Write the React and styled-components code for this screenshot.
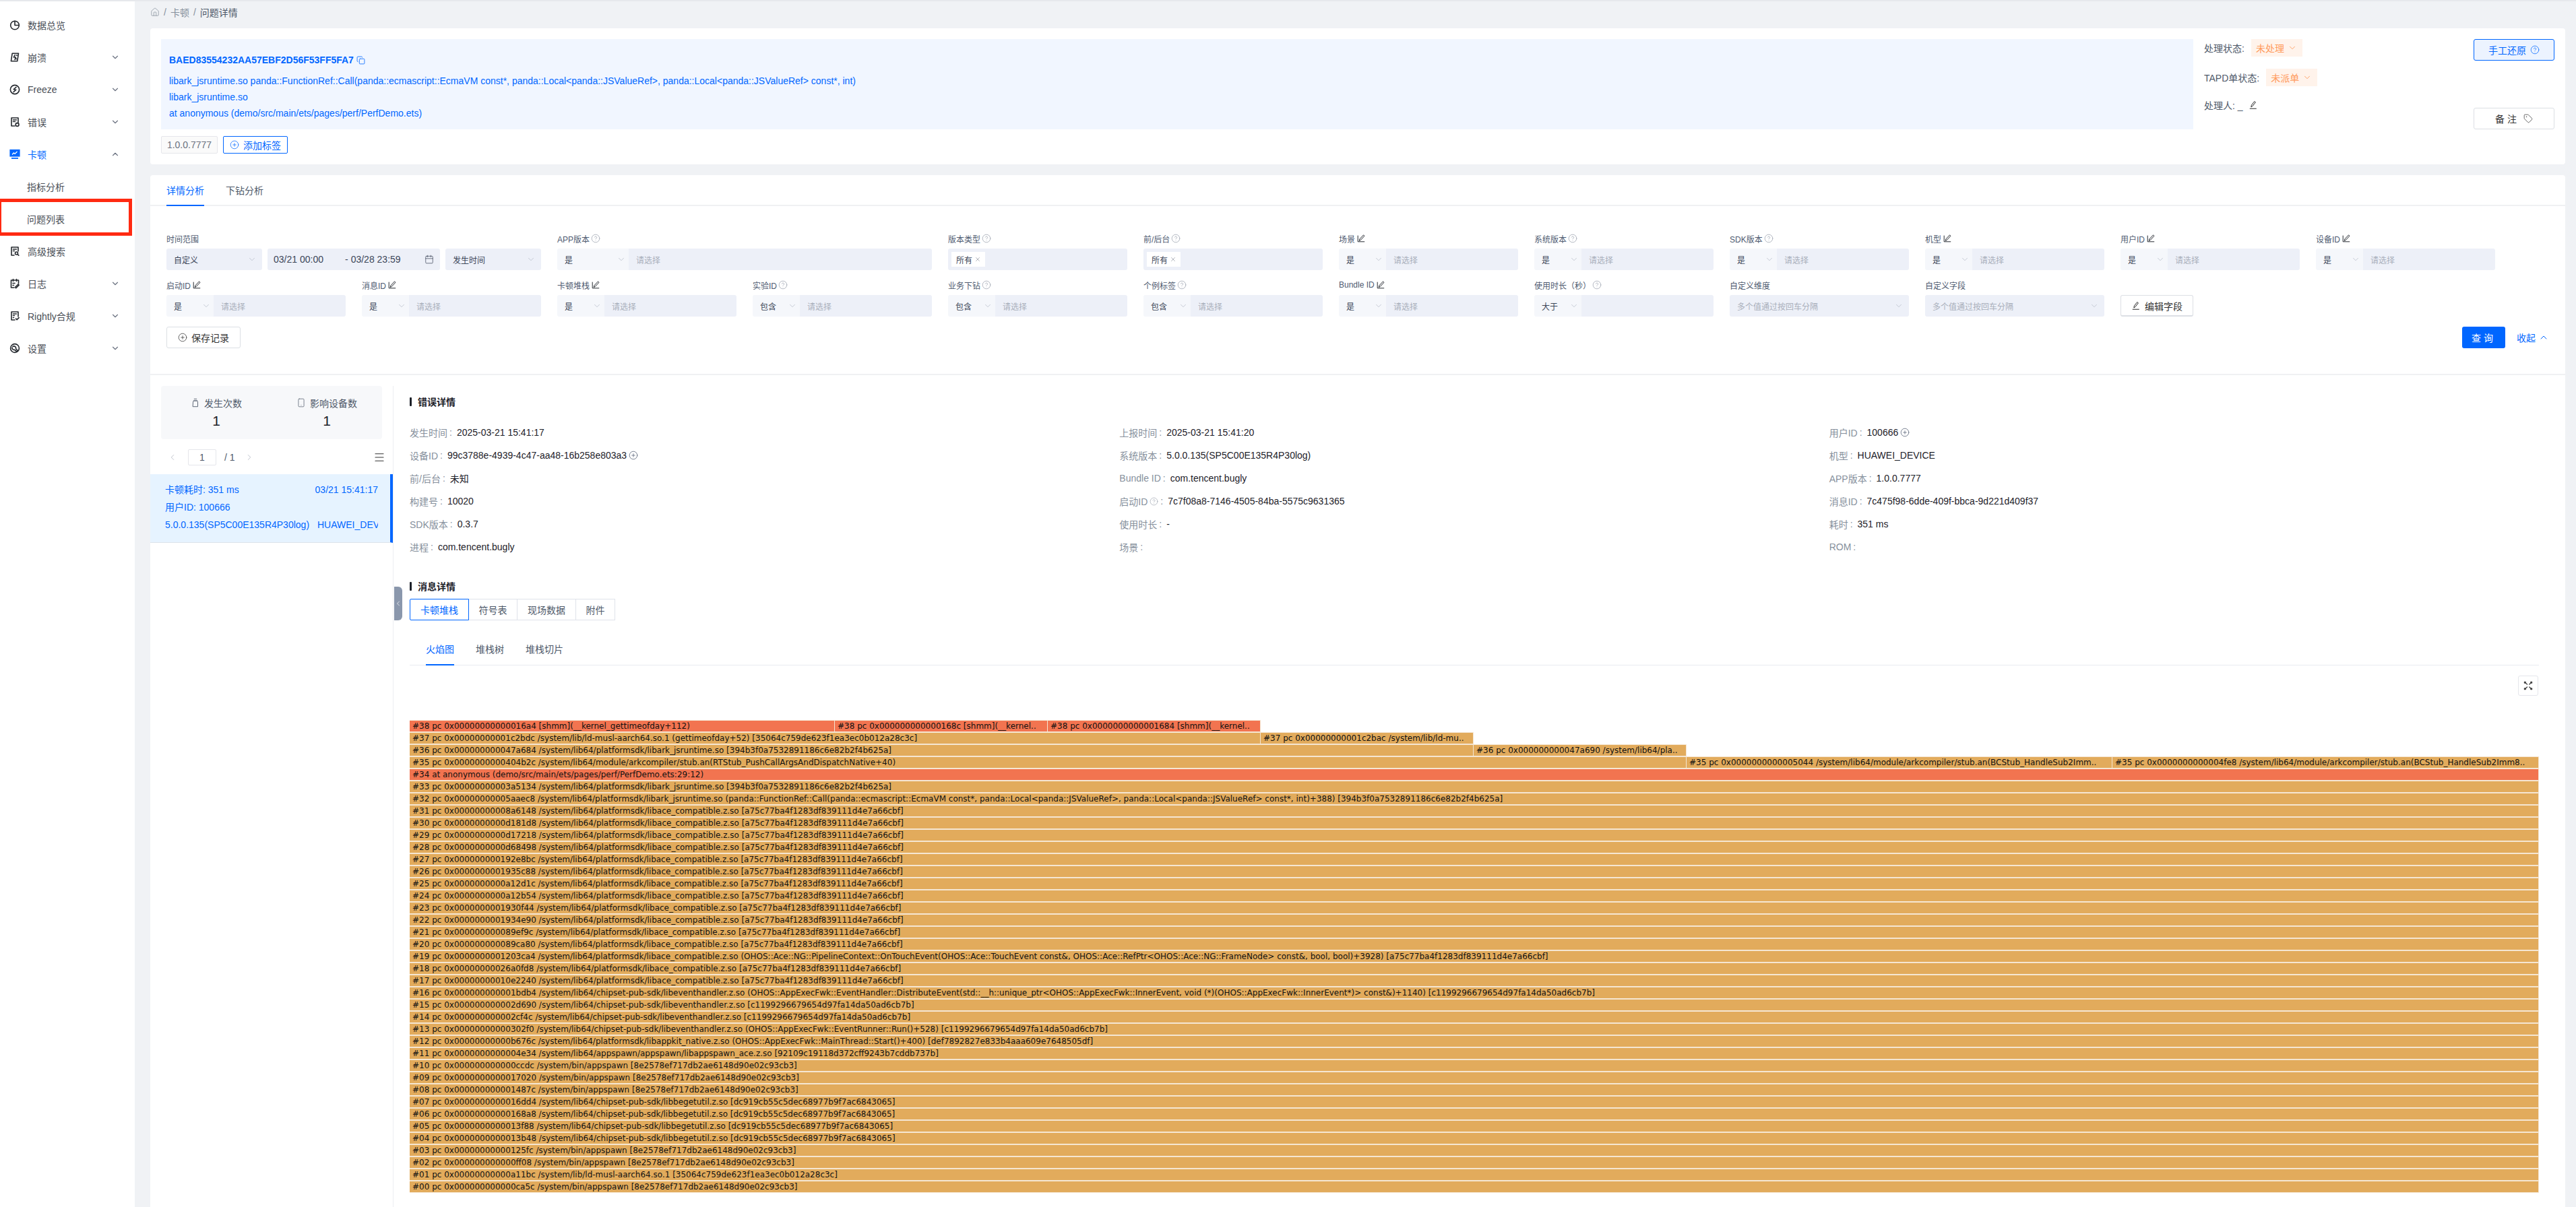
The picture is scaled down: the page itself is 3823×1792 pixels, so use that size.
import React from "react";
import styled, { createGlobalStyle } from "styled-components";
import {
  ChevronDown,
  ChevronUp,
  ChevronLeft,
  ChevronRight,
  CircleHelp,
  CirclePlus,
  Copy,
  House,
  Tag,
  Calendar,
  Menu,
  Smartphone,
  X,
} from "lucide-react";

const GlobalStyle = createGlobalStyle`
  * { box-sizing: border-box; }
  html, body { margin: 0; padding: 0; height: 100%; overflow: hidden; }
  body {
    background: #f0f2f5;
    color: #1d2129;
    font-family: "Liberation Sans", "Noto Sans CJK SC", sans-serif;
    font-size: 14px;
  }
`;

const BLUE = "#0066ff";

/* ---------- drawn icons ---------- */

const Svg = ({ children, size = 16, color = "currentColor", width = 1.6 }) => (
  <svg width={size} height={size} viewBox="0 0 16 16" fill="none" stroke={color} strokeWidth={width} strokeLinecap="round" strokeLinejoin="round">
    {children}
  </svg>
);

const navIcons = {
  overview: (
    <Svg>
      <circle cx="8" cy="8.5" r="6.3" />
      <path d="M8 2.2v6.3h6.3" />
    </Svg>
  ),
  crash: (
    <Svg>
      <path d="M4.2 2.2h9.3l-1.8 11.6H2.4z" />
      <path d="M8 4.5 6.4 8h3l-1.4 3.5M10 5h1.5M9.8 10.5h1" />
    </Svg>
  ),
  freeze: (
    <Svg>
      <circle cx="8" cy="8" r="6.6" />
      <path d="M10 4.4 6.3 7.6l3.4.8L6 11.6" />
    </Svg>
  ),
  error: (
    <Svg>
      <path d="M8 14H3V2h10v7" />
      <path d="M5.5 5h5M5.5 7.5h3" />
      <circle cx="11.6" cy="12" r="2.4" />
    </Svg>
  ),
  jank: (
    <svg width="16" height="16" viewBox="0 0 16 16" fill="none">
      <rect x="1" y="1.5" width="14" height="9.5" fill={BLUE} stroke={BLUE} strokeWidth="1.2" />
      <path d="M4 8.5 6.5 6l1.6 1.4L11.5 4" stroke="#fff" strokeWidth="1.3" />
      <path d="M3 14h10" stroke={BLUE} strokeWidth="1.8" />
    </svg>
  ),
  search: (
    <Svg>
      <path d="M7 14H3V2h10v6" />
      <path d="M5.5 5h5M5.5 7.5h2" />
      <circle cx="10.5" cy="11" r="2" />
      <path d="m12 12.5 1.8 1.6" />
    </Svg>
  ),
  log: (
    <Svg>
      <path d="M7 14H2.5V3h11v5" />
      <path d="M5.5 1.5v3M10.5 1.5v3M5 7.5h3M5 10.5h1.5" />
      <path d="m8.5 13.5 4.5-4.5 1.2 1.2-4.5 4.5z" />
    </Svg>
  ),
  rightly: (
    <Svg>
      <path d="M8 14H3V2h10v7" />
      <path d="M5.5 5h5M5.5 7.5h2M5.5 10.5h1" />
      <path d="m9.5 12 1.6 1.6 3-3" />
    </Svg>
  ),
  setting: (
    <Svg>
      <circle cx="8" cy="8" r="6.4" />
      <path d="M5 5.5a3 3 0 0 1 4.6 3.2l2.8 3-1.6 1.5-3-2.9A3 3 0 0 1 4 7" />
    </Svg>
  ),
};

const EditMark = () => (
  <Svg size={14} color="#1d2129" width={1.1}>
    <path d="M2.5 3.5v10h11" />
    <path d="M5 11.5 5.6 9 12 2.2l1.7 1.6L7.4 10.5z" />
  </Svg>
);

const PenUnder = () => (
  <Svg size={14} color="#222" width={1.1}>
    <path d="M4.5 11 5 8.2 10 1.8l1.9 1.4-5 6.4z" />
    <path d="M2.5 14h10.5" />
  </Svg>
);

const JarMark = () => (
  <Svg size={14} color="#5b6472" width={1.1}>
    <path d="M6 1.5h4M5 4.5h6M4 6.5a2 2 0 0 1 2-2h4a2 2 0 0 1 2 2v8H4z" />
  </Svg>
);

const FullscreenMark = () => (
  <Svg size={16} color="#444" width={1.4}>
    <path d="M3 3l3.5 3M13 3 9.8 6M3 13l3.5-3M13 13l-3.2-3" />
    <path d="M2.5 2.5h1.6v1.6H2.5zM11.9 2.5h1.6v1.6h-1.6zM2.5 11.9h1.6v1.6H2.5zM11.9 11.9h1.6v1.6h-1.6z" fill="#444" />
  </Svg>
);

/* ---------- shell ---------- */

const TopShade = styled.div`
  height: 2px;
  background: #e6e8ec;
`;

const Shell = styled.div`
  display: flex;
  height: 1790px;
  overflow: hidden;
`;

const Sidebar = styled.nav`
  width: 200px;
  flex-shrink: 0;
  background: #fff;
  padding-top: 11px;
`;

const NavRow = styled.div`
  position: relative;
  display: flex;
  align-items: center;
  height: 48px;
  padding: 0 22px 0 ${(p) => (p.$sub ? "40px" : "14px")};
  color: ${(p) => (p.$active ? BLUE : "#4a4f57")};
`;

const NavIcon = styled.span`
  display: flex;
  width: 16px;
  margin-right: 11px;
  color: #24282e;
`;

const NavLabel = styled.span`
  flex: 1;
`;

const Highlight = styled.span`
  position: absolute;
  left: 0;
  top: -6px;
  width: 196px;
  height: 55px;
  border: 5px solid #ff2a12;
  border-left-width: 2px;
`;

const Main = styled.main`
  display: flex;
  flex-direction: column;
  flex: 1;
  min-width: 0;
  padding: 0 16px 0 23px;
`;

const Crumbs = styled.div`
  display: flex;
  align-items: center;
  flex-shrink: 0;
  gap: 6px;
  height: 40px;
  padding-bottom: 8px;
  color: #86909c;
`;

const CrumbNow = styled.span`
  color: #4e5969;
`;

/* ---------- issue card ---------- */

const IssueCard = styled.section`
  display: flex;
  flex-shrink: 0;
  background: #fff;
  border-radius: 4px;
  padding: 16px;
  height: 202px;
`;

const IssueLeft = styled.div`
  width: 3016px;
  flex-shrink: 0;
`;

const StackBox = styled.div`
  height: 134px;
  background: #f1f6ff;
  padding: 19px 12px 0;
  color: ${BLUE};
`;

const StackTitle = styled.div`
  display: flex;
  align-items: center;
  gap: 4px;
  height: 24px;
  margin-bottom: 7px;
  font-weight: 700;
`;

const StackLine = styled.div`
  line-height: 24px;
`;

const IssueTags = styled.div`
  display: flex;
  gap: 8px;
  margin-top: 10px;
`;

const VersionTag = styled.span`
  display: flex;
  align-items: center;
  justify-content: center;
  width: 84px;
  height: 26px;
  background: #fafafa;
  border: 1px solid #e5e6eb;
  border-radius: 2px;
  color: #6b7280;
`;

const AddTag = styled.button`
  display: flex;
  align-items: center;
  justify-content: center;
  gap: 6px;
  width: 96px;
  height: 26px;
  padding: 0;
  background: #fff;
  border: 1px solid ${BLUE};
  border-radius: 2px;
  color: ${BLUE};
  font: inherit;
`;

const StatusCol = styled.div`
  flex: 1;
  padding-left: 16px;
  color: #4e5969;
`;

const StatusRow = styled.div`
  display: flex;
  align-items: center;
  height: 26px;
  margin-bottom: ${(p) => p.$gap || "18px"};
  gap: ${(p) => p.$inner || "10px"};
`;

const OrangeTag = styled.span`
  display: flex;
  align-items: center;
  gap: 5px;
  height: 26px;
  padding: 0 8px 0 7px;
  background: #fff3eb;
  color: #ff9a5c;
`;

const ActionCol = styled.div`
  display: flex;
  flex-direction: column;
  justify-content: space-between;
  width: 120px;
  height: 134px;
`;

const RestoreButton = styled.button`
  display: flex;
  align-items: center;
  justify-content: center;
  gap: 6px;
  height: 32px;
  padding: 0;
  background: #ecf3ff;
  border: 1px solid ${BLUE};
  border-radius: 3px;
  color: ${BLUE};
  font: inherit;
`;

const GhostButton = styled.button`
  display: flex;
  align-items: center;
  justify-content: center;
  gap: 6px;
  height: 32px;
  padding: 0;
  background: #fff;
  border: 1px solid #dcdfe4;
  border-radius: 3px;
  color: #333;
  font: inherit;
  letter-spacing: ${(p) => p.$spaced || "normal"};
`;

/* ---------- analysis card ---------- */

const AnalysisCard = styled.section`
  display: flex;
  flex-direction: column;
  flex: 1;
  min-height: 0;
  margin-top: 16px;
  background: #fff;
  border-radius: 4px 4px 0 0;
`;

const TabBar = styled.div`
  display: flex;
  flex-shrink: 0;
  gap: 32px;
  height: 46px;
  padding-left: 24px;
  border-bottom: 2px solid #f0f1f3;
`;

const Tab = styled.div`
  height: 46px;
  line-height: 46px;
  padding-bottom: 2px;
  color: ${(p) => (p.$active ? BLUE : "#4e5969")};
  border-bottom: 2px solid ${(p) => (p.$active ? BLUE : "transparent")};
`;

const FilterArea = styled.div`
  flex-shrink: 0;
  padding: 37px 104px 38px 24px;
  border-bottom: 2px solid #f0f1f3;
`;

const FilterGrid = styled.div`
  display: grid;
  grid-template-columns: repeat(12, 266px);
  column-gap: 24px;
  row-gap: 11px;
`;

const FilterField = styled.div`
  grid-column: span ${(p) => p.$span || 1};
`;

const FilterLabel = styled.div`
  display: flex;
  align-items: center;
  gap: 2px;
  height: 22px;
  margin-bottom: 4px;
  font-size: 12px;
  color: #4e5a70;
`;

const InputRow = styled.div`
  display: flex;
  gap: ${(p) => p.$gap || "0"};
  height: 32px;
  font-size: 12px;
`;

const Prefix = styled.div`
  display: flex;
  align-items: center;
  justify-content: space-between;
  width: ${(p) => p.$w || "70px"};
  flex-shrink: 0;
  padding: 0 4px 0 11px;
  background: #f5f7fb;
  border-radius: 3px 0 0 3px;
  color: #3c4658;
`;

const Field = styled.div`
  display: flex;
  align-items: center;
  flex: 1;
  min-width: 0;
  padding: 0 ${(p) => p.$pad || "11px"};
  background: #edf0f8;
  border-radius: ${(p) => (p.$whole ? "3px" : "0 3px 3px 0")};
  color: #a9afbb;
`;

const SelectBox = styled(Field)`
  justify-content: space-between;
  flex: none;
  width: 142px;
  border-radius: 3px;
  color: #3c4658;
  padding-right: 8px;
`;

const DateBox = styled(Field)`
  flex: none;
  width: 256px;
  border-radius: 3px;
  font-size: 14px;
  color: #3c4658;
  padding: 0 9px;
`;

const DateGap = styled.span`
  margin-left: 32px;
  margin-right: 4px;
`;

const DateEnd = styled.span`
  margin-left: auto;
  display: flex;
`;

const Chip = styled.span`
  display: flex;
  align-items: center;
  gap: 3px;
  width: 50px;
  height: 22px;
  padding-left: 7px;
  margin-left: -6px;
  background: #fff;
  color: #3c4658;
`;

const WideSelect = styled(Field)`
  justify-content: space-between;
  padding-right: 8px;
`;

const EditFields = styled(GhostButton)`
  width: 108px;
  border-bottom-width: 2px;
`;

const ActionBar = styled.div`
  display: flex;
  align-items: center;
  justify-content: space-between;
  margin-top: 15px;
  margin-right: -80px;
`;

const SaveButton = styled(GhostButton)`
  width: 110px;
`;

const QueryGroup = styled.div`
  display: flex;
  align-items: center;
  gap: 17px;
`;

const QueryButton = styled.button`
  width: 64px;
  height: 32px;
  padding: 0;
  background: ${BLUE};
  border: 0;
  border-radius: 3px;
  color: #fff;
  font: inherit;
  letter-spacing: 4px;
`;

const Collapse = styled.span`
  display: flex;
  align-items: center;
  gap: 4px;
  color: ${BLUE};
`;

/* ---------- detail ---------- */

const Detail = styled.div`
  position: relative;
  display: flex;
  flex: 1;
  min-height: 0;
`;

const Handle = styled.span`
  position: absolute;
  left: 362px;
  top: 314px;
  display: flex;
  align-items: center;
  justify-content: center;
  width: 12px;
  height: 50px;
  background: #8a97ac;
  border-radius: 0 6px 6px 0;
  color: #fff;
  svg {
    flex-shrink: 0;
  }
`;

const ListPane = styled.aside`
  width: 361px;
  flex-shrink: 0;
  margin-top: 16px;
  border-right: 1px solid #eceef1;
`;

const Stats = styled.div`
  display: grid;
  grid-template-columns: 1fr 1fr;
  align-items: center;
  height: 79px;
  margin: 0 16px;
  background: #f7f8fa;
  border-radius: 4px;
`;

const Stat = styled.div`
  display: flex;
  flex-direction: column;
  align-items: center;
  gap: 4px;
  color: #4e5969;
`;

const StatTitle = styled.div`
  display: flex;
  align-items: center;
  gap: 6px;
  height: 20px;
`;

const StatValue = styled.div`
  font-size: 21px;
  line-height: 26px;
  color: #1d2129;
`;

const Pager = styled.div`
  display: flex;
  align-items: center;
  height: 52px;
  padding: 2px 11px 0 26px;
  color: #4e5969;
`;

const PageInput = styled.span`
  display: flex;
  align-items: center;
  justify-content: center;
  width: 42px;
  height: 24px;
  margin: 0 12px 0 16px;
  border: 1px solid #e5e6eb;
  border-radius: 2px;
`;

const PageTotal = styled.span`
  margin-right: 14px;
`;

const PagerMenu = styled.span`
  display: flex;
  margin-left: auto;
  color: #333;
`;

const EventItem = styled.div`
  height: 102px;
  padding: 10px 18px 0 22px;
  background: #e6f3ff;
  border-right: 4px solid ${BLUE};
  border-bottom: 1px solid #dde3ea;
  color: ${BLUE};
`;

const EventLine = styled.div`
  display: flex;
  justify-content: space-between;
  height: 26px;
  line-height: 26px;
  white-space: nowrap;
  overflow: hidden;
`;

const EventDevice = styled.span`
  width: 90px;
  overflow: hidden;
`;

const DetailPane = styled.div`
  flex: 1;
  min-width: 0;
  padding: 28px 39px 0 24px;
`;

const SectionTitle = styled.h3`
  display: flex;
  align-items: center;
  gap: 9px;
  height: 22px;
  margin: ${(p) => p.$top || "0"} 0 0;
  font-size: 14px;
  font-weight: 700;
  color: #1d2129;
  &::before {
    content: "";
    width: 3px;
    height: 13px;
    border-radius: 1px;
    background: #1d2129;
  }
`;

const InfoGrid = styled.div`
  display: grid;
  grid-template-columns: repeat(3, 1fr);
  grid-auto-rows: 34px;
  margin-top: 18px;
`;

const Info = styled.div`
  display: flex;
  align-items: center;
  gap: 3px;
  color: #1d2129;
`;

const InfoKey = styled.span`
  color: #86909c;
  margin-right: ${(p) => p.$after || "0"};
`;

const Segments = styled.div`
  display: flex;
  height: 32px;
  margin-top: 8px;
`;

const Segment = styled.div`
  display: flex;
  align-items: center;
  justify-content: center;
  width: ${(p) => p.$w};
  margin-left: -1px;
  border: 1px solid ${(p) => (p.$active ? BLUE : "#dfe3ea")};
  z-index: ${(p) => (p.$active ? 1 : 0)};
  color: ${(p) => (p.$active ? BLUE : "#4e5969")};
  &:first-child {
    margin-left: 0;
    border-radius: 2px 0 0 2px;
  }
`;

const InnerTabs = styled.div`
  display: flex;
  gap: 32px;
  height: 46px;
  margin-top: 21px;
  padding-left: 24px;
  border-bottom: 1px solid #e8ebf0;
`;

const InnerTab = styled.div`
  height: 46px;
  line-height: 44px;
  color: ${(p) => (p.$active ? BLUE : "#4e5969")};
  border-bottom: 2px solid ${(p) => (p.$active ? BLUE : "transparent")};
`;

const ChartTools = styled.div`
  display: flex;
  justify-content: flex-end;
  margin-top: 15px;
  padding-right: 1px;
`;

const ToolButton = styled.span`
  display: flex;
  align-items: center;
  justify-content: center;
  width: 30px;
  height: 30px;
  border: 1px solid #e5e6eb;
  border-radius: 3px;
`;

const Flame = styled.div`
  margin-top: 36px;
  font-family: "DejaVu Sans", sans-serif;
  font-size: 12px;
`;

const FlameRow = styled.div`
  display: flex;
  height: 18px;
`;

const FlameBar = styled.div`
  width: ${(p) => p.$w}px;
  flex-shrink: 0;
  height: 18px;
  padding-left: 4px;
  line-height: 17px;
  white-space: nowrap;
  overflow: hidden;
  color: #111;
  background: ${(p) => (p.$hot ? "#f27450" : "#e2ab5c")};
  border-top: 1px solid #f5e6d2;
  border-bottom: 1px solid #f5e6d2;
  border-right: 1px solid #f5e6d2;
`;

/* ---------- data ---------- */

const navItems = [
  { label: "数据总览", icon: "overview" },
  { label: "崩溃", icon: "crash", arrow: "down" },
  { label: "Freeze", icon: "freeze", arrow: "down" },
  { label: "错误", icon: "error", arrow: "down" },
  { label: "卡顿", icon: "jank", arrow: "up", active: true },
  { label: "指标分析", sub: true },
  { label: "问题列表", sub: true, marked: true },
  { label: "高级搜索", icon: "search" },
  { label: "日志", icon: "log", arrow: "down" },
  { label: "Rightly合规", icon: "rightly", arrow: "down" },
  { label: "设置", icon: "setting", arrow: "down" },
];

const filterRow = [
  { label: "启动ID", mark: "edit", pre: "是" },
  { label: "消息ID", mark: "edit", pre: "是" },
  { label: "卡顿堆栈", mark: "edit", pre: "是" },
  { label: "实验ID", mark: "help", pre: "包含" },
  { label: "业务下钻", mark: "help", pre: "包含" },
  { label: "个例标签", mark: "help", pre: "包含" },
  { label: "Bundle ID", mark: "edit", pre: "是" },
  { label: "使用时长（秒）", mark: "help", pre: "大于", empty: true },
];

const topFilters = [
  { label: "场景", mark: "edit", pre: "是" },
  { label: "系统版本", mark: "help", pre: "是" },
  { label: "SDK版本", mark: "help", pre: "是" },
  { label: "机型", mark: "edit", pre: "是" },
  { label: "用户ID", mark: "edit", pre: "是" },
  { label: "设备ID", mark: "edit", pre: "是" },
];

const infoRows = [
  ["发生时间", "2025-03-21 15:41:17"],
  ["上报时间", "2025-03-21 15:41:20"],
  ["用户ID", "100666", "plus"],
  ["设备ID", "99c3788e-4939-4c47-aa48-16b258e803a3", "plus"],
  ["系统版本", "5.0.0.135(SP5C00E135R4P30log)"],
  ["机型", "HUAWEI_DEVICE"],
  ["前/后台", "未知"],
  ["Bundle ID", "com.tencent.bugly"],
  ["APP版本", "1.0.0.7777"],
  ["构建号", "10020"],
  ["启动ID", "7c7f08a8-7146-4505-84ba-5575c9631365", null, true],
  ["消息ID", "7c475f98-6dde-409f-bbca-9d221d409f37"],
  ["SDK版本", "0.3.7"],
  ["使用时长", "-"],
  ["耗时", "351 ms"],
  ["进程", "com.tencent.bugly"],
  ["场景", ""],
  ["ROM", ""],
];

const JS = "/system/lib64/platformsdk/libark_jsruntime.so";
const JS_ID = "[394b3f0a7532891186c6e82b2f4b625a]";
const ACE = "/system/lib64/platformsdk/libace_compatible.z.so";
const ACE_ID = "[a75c77ba4f1283df839111d4e7a66cbf]";
const EH = "/system/lib64/chipset-pub-sdk/libeventhandler.z.so";
const EH_ID = "[c1199296679654d97fa14da50ad6cb7b]";
const SPAWN = "/system/bin/appspawn [8e2578ef717db2ae6148d90e02c93cb3]";
const BEGET = "/system/lib64/chipset-pub-sdk/libbegetutil.z.so [dc919cb55c5dec68977b9f7ac6843065]";
const MUSL = "/system/lib/ld-musl-aarch64.so.1";
const MUSL_ID = "[35064c759de623f1ea3ec0b012a28c3c]";
const STUB = "/system/lib64/module/arkcompiler/stub.an";

const pc = (n, addr, rest) => `#${n} pc 0x${addr.padStart(16, "0")} ${rest}`;

const FULL = 3160;

const flameRows = [
  [
    { w: 631, hot: true, t: pc(38, "16a4", "[shmm](__kernel_gettimeofday+112)") },
    { w: 316, hot: true, t: pc(38, "168c", "[shmm](__kernel..") },
    { w: 316, hot: true, t: pc(38, "1684", "[shmm](__kernel..") },
  ],
  [
    { w: 1263, t: pc(37, "1c2bdc", `${MUSL} (gettimeofday+52) ${MUSL_ID}`) },
    { w: 316, t: pc(37, "1c2bac", "/system/lib/ld-mu..") },
  ],
  [
    { w: 1579, t: pc(36, "47a684", `${JS} ${JS_ID}`) },
    { w: 316, t: pc(36, "47a690", "/system/lib64/pla..") },
  ],
  [
    { w: 1895, t: pc(35, "404b2c", `${STUB}(RTStub_PushCallArgsAndDispatchNative+40)`) },
    { w: 632, t: pc(35, "5044", `${STUB}(BCStub_HandleSub2Imm..`) },
    { w: 633, t: pc(35, "4fe8", `${STUB}(BCStub_HandleSub2Imm8..`) },
  ],
  [{ w: FULL, hot: true, t: "#34 at anonymous (demo/src/main/ets/pages/perf/PerfDemo.ets:29:12)" }],
  [{ w: FULL, t: pc(33, "3a5134", `${JS} ${JS_ID}`) }],
  [{ w: FULL, t: pc(32, "5aaec8", `${JS} (panda::FunctionRef::Call(panda::ecmascript::EcmaVM const*, panda::Local<panda::JSValueRef>, panda::Local<panda::JSValueRef> const*, int)+388) ${JS_ID}`) }],
  ...[
    [31, "8a6148"],
    [30, "d181d8"],
    [29, "d17218"],
    [28, "d68498"],
    [27, "192e8bc"],
    [26, "1935c88"],
    [25, "a12d1c"],
    [24, "a12b54"],
    [23, "1930f44"],
    [22, "1934e90"],
    [21, "89ef9c"],
    [20, "89ca80"],
  ].map(([n, a]) => [{ w: FULL, t: pc(n, a, `${ACE} ${ACE_ID}`) }]),
  [{ w: FULL, t: pc(19, "1203ca4", `${ACE} (OHOS::Ace::NG::PipelineContext::OnTouchEvent(OHOS::Ace::TouchEvent const&, OHOS::Ace::RefPtr<OHOS::Ace::NG::FrameNode> const&, bool, bool)+3928) ${ACE_ID}`) }],
  [{ w: FULL, t: pc(18, "26a0fd8", `${ACE} ${ACE_ID}`) }],
  [{ w: FULL, t: pc(17, "10e2240", `${ACE} ${ACE_ID}`) }],
  [{ w: FULL, t: pc(16, "1bdb4", `${EH} (OHOS::AppExecFwk::EventHandler::DistributeEvent(std::__h::unique_ptr<OHOS::AppExecFwk::InnerEvent, void (*)(OHOS::AppExecFwk::InnerEvent*)> const&)+1140) ${EH_ID}`) }],
  [{ w: FULL, t: pc(15, "2d690", `${EH} ${EH_ID}`) }],
  [{ w: FULL, t: pc(14, "2cf4c", `${EH} ${EH_ID}`) }],
  [{ w: FULL, t: pc(13, "302f0", `${EH} (OHOS::AppExecFwk::EventRunner::Run()+528) ${EH_ID}`) }],
  [{ w: FULL, t: pc(12, "b676c", "/system/lib64/platformsdk/libappkit_native.z.so (OHOS::AppExecFwk::MainThread::Start()+400) [def7892827e833b4aaa609e7648505df]") }],
  [{ w: FULL, t: pc(11, "4e34", "/system/lib64/appspawn/appspawn/libappspawn_ace.z.so [92109c19118d372cff9243b7cddb737b]") }],
  [{ w: FULL, t: pc(10, "ccdc", SPAWN) }],
  [{ w: FULL, t: pc("09", "17020", SPAWN) }],
  [{ w: FULL, t: pc("08", "1487c", SPAWN) }],
  [{ w: FULL, t: pc("07", "16dd4", BEGET) }],
  [{ w: FULL, t: pc("06", "168a8", BEGET) }],
  [{ w: FULL, t: pc("05", "13f88", BEGET) }],
  [{ w: FULL, t: pc("04", "13b48", BEGET) }],
  [{ w: FULL, t: pc("03", "125fc", SPAWN) }],
  [{ w: FULL, t: pc("02", "ff08", SPAWN) }],
  [{ w: FULL, t: pc("01", "a11bc", `${MUSL} ${MUSL_ID}`) }],
  [{ w: FULL, t: pc("00", "ca5c", SPAWN) }],
];

/* ---------- small parts ---------- */

const Arrow = ({ size = 14 }) => <ChevronDown size={size} color="#b4bac6" strokeWidth={1.25} />;

const Hint = ({ mark }) =>
  mark === "edit" ? <EditMark /> : <CircleHelp size={14} color="#9aa1ad" strokeWidth={1.25} />;

const PrefixedFilter = ({ label, mark, pre, preWidth, empty, span }) => (
  <FilterField $span={span}>
    <FilterLabel>
      {label}
      <Hint mark={mark} />
    </FilterLabel>
    <InputRow>
      <Prefix $w={preWidth}>
        {pre}
        <Arrow />
      </Prefix>
      <Field>{empty ? "" : "请选择"}</Field>
    </InputRow>
  </FilterField>
);

const ChipFilter = ({ label }) => (
  <FilterField>
    <FilterLabel>
      {label}
      <Hint mark="help" />
    </FilterLabel>
    <InputRow>
      <Field $whole>
        <Chip>
          所有
          <X size={10} color="#6b7280" strokeWidth={1.25} />
        </Chip>
      </Field>
    </InputRow>
  </FilterField>
);

const SeparatorFilter = ({ label }) => (
  <FilterField>
    <FilterLabel>{label}</FilterLabel>
    <InputRow>
      <WideSelect $whole>
        多个值通过按回车分隔
        <Arrow />
      </WideSelect>
    </InputRow>
  </FilterField>
);

export default function App() {
  return (
    <>
      <GlobalStyle />
      <TopShade />
      <Shell>
        <Sidebar>
          {navItems.map((item) => (
            <NavRow key={item.label} $sub={item.sub} $active={item.active}>
              {item.icon && <NavIcon>{navIcons[item.icon]}</NavIcon>}
              <NavLabel>{item.label}</NavLabel>
              {item.arrow === "down" && <ChevronDown size={14} color="#6b7280" strokeWidth={2} />}
              {item.arrow === "up" && <ChevronUp size={14} color="#6b7280" strokeWidth={2} />}
              {item.marked && <Highlight />}
            </NavRow>
          ))}
        </Sidebar>
        <Main>
          <Crumbs>
            <House size={14} strokeWidth={1.25} />
            <span>/</span>
            <span>卡顿</span>
            <span>/</span>
            <CrumbNow>问题详情</CrumbNow>
          </Crumbs>

          <IssueCard>
            <IssueLeft>
              <StackBox>
                <StackTitle>
                  BAED83554232AA57EBF2D56F53FF5FA7
                  <Copy size={13} strokeWidth={1.5} />
                </StackTitle>
                <StackLine>libark_jsruntime.so panda::FunctionRef::Call(panda::ecmascript::EcmaVM const*, panda::Local&lt;panda::JSValueRef&gt;, panda::Local&lt;panda::JSValueRef&gt; const*, int)</StackLine>
                <StackLine>libark_jsruntime.so</StackLine>
                <StackLine>at anonymous (demo/src/main/ets/pages/perf/PerfDemo.ets)</StackLine>
              </StackBox>
              <IssueTags>
                <VersionTag>1.0.0.7777</VersionTag>
                <AddTag>
                  <CirclePlus size={14} strokeWidth={1.25} />
                  添加标签
                </AddTag>
              </IssueTags>
            </IssueLeft>
            <StatusCol>
              <StatusRow>
                处理状态:
                <OrangeTag>
                  未处理
                  <ChevronDown size={14} strokeWidth={1.5} />
                </OrangeTag>
              </StatusRow>
              <StatusRow $gap="15px">
                TAPD单状态:
                <OrangeTag>
                  未派单
                  <ChevronDown size={14} strokeWidth={1.5} />
                </OrangeTag>
              </StatusRow>
              <StatusRow $inner="8px">
                处理人: _
                <PenUnder />
              </StatusRow>
            </StatusCol>
            <ActionCol>
              <RestoreButton>
                手工还原
                <CircleHelp size={14} strokeWidth={1.25} />
              </RestoreButton>
              <GhostButton $spaced="4px">
                备注
                <Tag size={14} strokeWidth={1.25} />
              </GhostButton>
            </ActionCol>
          </IssueCard>

          <AnalysisCard>
            <TabBar>
              <Tab $active>详情分析</Tab>
              <Tab>下钻分析</Tab>
            </TabBar>

            <FilterArea>
              <FilterGrid>
                <FilterField $span={2}>
                  <FilterLabel>时间范围</FilterLabel>
                  <InputRow $gap="8px">
                    <SelectBox $whole>
                      自定义
                      <Arrow />
                    </SelectBox>
                    <DateBox $whole>
                      03/21 00:00
                      <DateGap>-</DateGap>
                      03/28 23:59
                      <DateEnd>
                        <Calendar size={14} color="#3c4658" strokeWidth={1.25} />
                      </DateEnd>
                    </DateBox>
                    <SelectBox $whole>
                      发生时间
                      <Arrow />
                    </SelectBox>
                  </InputRow>
                </FilterField>
                <PrefixedFilter label="APP版本" mark="help" pre="是" preWidth="106px" span={2} />
                <ChipFilter label="版本类型" />
                <ChipFilter label="前/后台" />
                {topFilters.map((f) => (
                  <PrefixedFilter key={f.label} {...f} />
                ))}
                {filterRow.map((f) => (
                  <PrefixedFilter key={f.label} {...f} />
                ))}
                <SeparatorFilter label="自定义维度" />
                <SeparatorFilter label="自定义字段" />
                <FilterField>
                  <FilterLabel />
                  <EditFields>
                    <PenUnder />
                    编辑字段
                  </EditFields>
                </FilterField>
              </FilterGrid>
              <ActionBar>
                <SaveButton>
                  <CirclePlus size={14} strokeWidth={1.25} />
                  保存记录
                </SaveButton>
                <QueryGroup>
                  <QueryButton>查询</QueryButton>
                  <Collapse>
                    收起
                    <ChevronUp size={16} strokeWidth={1.5} />
                  </Collapse>
                </QueryGroup>
              </ActionBar>
            </FilterArea>

            <Detail>
              <Handle>
                <ChevronLeft size={12} strokeWidth={1.5} />
              </Handle>
              <ListPane>
                <Stats>
                  <Stat>
                    <StatTitle>
                      <JarMark />
                      发生次数
                    </StatTitle>
                    <StatValue>1</StatValue>
                  </Stat>
                  <Stat>
                    <StatTitle>
                      <Smartphone size={14} strokeWidth={1.25} />
                      影响设备数
                    </StatTitle>
                    <StatValue>1</StatValue>
                  </Stat>
                </Stats>
                <Pager>
                  <ChevronLeft size={14} color="#a9afbb" strokeWidth={1.25} />
                  <PageInput>1</PageInput>
                  <PageTotal>/ 1</PageTotal>
                  <ChevronRight size={14} color="#a9afbb" strokeWidth={1.25} />
                  <PagerMenu>
                    <Menu size={18} strokeWidth={1.6} />
                  </PagerMenu>
                </Pager>
                <EventItem>
                  <EventLine>
                    <span>卡顿耗时: 351 ms</span>
                    <span>03/21 15:41:17</span>
                  </EventLine>
                  <EventLine>
                    <span>用户ID: 100666</span>
                  </EventLine>
                  <EventLine>
                    <span>5.0.0.135(SP5C00E135R4P30log)</span>
                    <EventDevice>HUAWEI_DEVICE</EventDevice>
                  </EventLine>
                </EventItem>
              </ListPane>

              <DetailPane>
                <SectionTitle>错误详情</SectionTitle>
                <InfoGrid>
                  {infoRows.map(([key, value, extra, help]) => (
                    <Info key={key}>
                      <InfoKey>{key}</InfoKey>
                      {help && <CircleHelp size={13} color="#9aa1ad" strokeWidth={1.25} />}
                      <InfoKey $after="4px">:</InfoKey>
                      <span>{value}</span>
                      {extra && <CirclePlus size={14} color="#4e5a70" strokeWidth={1.25} />}
                    </Info>
                  ))}
                </InfoGrid>

                <SectionTitle $top="30px">消息详情</SectionTitle>
                <Segments>
                  <Segment $active $w="88px">卡顿堆栈</Segment>
                  <Segment $w="73px">符号表</Segment>
                  <Segment $w="88px">现场数据</Segment>
                  <Segment $w="59px">附件</Segment>
                </Segments>

                <InnerTabs>
                  <InnerTab $active>火焰图</InnerTab>
                  <InnerTab>堆栈树</InnerTab>
                  <InnerTab>堆栈切片</InnerTab>
                </InnerTabs>

                <ChartTools>
                  <ToolButton>
                    <FullscreenMark />
                  </ToolButton>
                </ChartTools>

                <Flame>
                  {flameRows.map((row) => (
                    <FlameRow key={row[0].t}>
                      {row.map((bar) => (
                        <FlameBar key={bar.t} $w={bar.w} $hot={bar.hot}>
                          {bar.t}
                        </FlameBar>
                      ))}
                    </FlameRow>
                  ))}
                </Flame>
              </DetailPane>
            </Detail>
          </AnalysisCard>
        </Main>
      </Shell>
    </>
  );
}
